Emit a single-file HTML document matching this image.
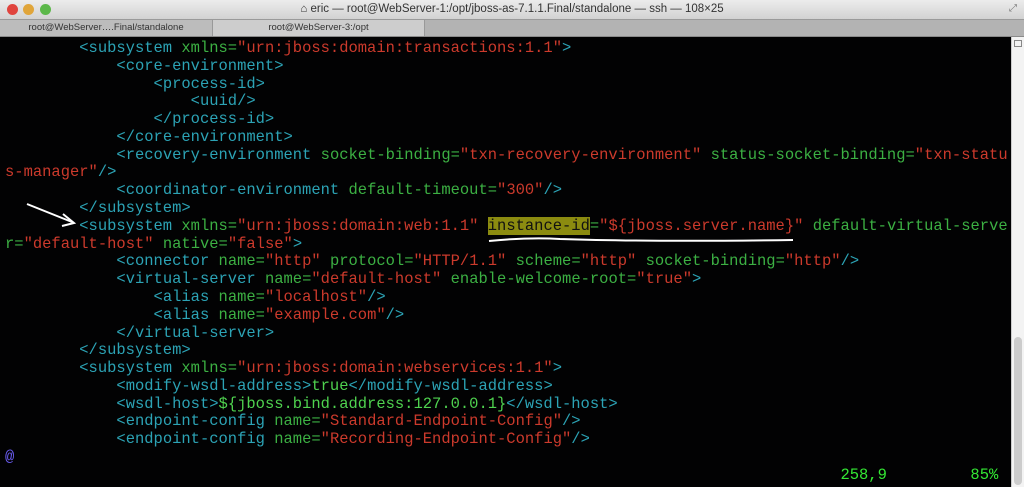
<!DOCTYPE html>
<html><head><meta charset="utf-8"><style>
html,body{margin:0;padding:0;width:1024px;height:487px;overflow:hidden;background:#000;font-family:"Liberation Sans",sans-serif}
#title{position:absolute;left:0;top:0;width:1024px;height:19px;background:linear-gradient(#ececec,#d2d2d2);}
.dot{position:absolute;top:4px;width:11px;height:11px;border-radius:50%}
#title .t{position:absolute;left:0;width:1024px;top:3px;text-align:center;font-size:11.5px;color:#333}
#tabs{position:absolute;left:0;top:19px;width:1024px;height:18px;background:#b3b3b3;border-top:1px solid #9a9a9a;box-sizing:border-box;border-bottom:1px solid #8a8a8a}
.tab{position:absolute;top:0;height:16px;font-size:9.5px;color:#333;text-align:center;line-height:16px;border-right:1px solid #999}
#term{position:absolute;left:0;top:37px;width:1011px;height:450px;background:#020203}
pre{position:absolute;left:5px;top:3px;margin:0;font-family:"Liberation Mono",monospace;font-size:15.47px;line-height:17.78px;color:#ddd}
.g{color:#3cb043}.c{color:#2ca3b5}.r{color:#cc3a2c}.v{color:#4fd24f}.s{color:#34e834}
.hl{background:#8b8b10;color:#111}
#sb{position:absolute;left:1011px;top:37px;width:13px;height:450px;background:#f3f3f3;border-left:1px solid #ccc;box-sizing:border-box}
</style></head><body>
<div id="title">
<div class="dot" style="left:7px;background:#e0443e"></div>
<div class="dot" style="left:23px;background:#e0a53a"></div>
<div class="dot" style="left:40px;background:#5cb84a"></div>
<div class="t">⌂ eric — root@WebServer-1:/opt/jboss-as-7.1.1.Final/standalone — ssh — 108×25</div>
<div style="position:absolute;right:5px;top:3px;width:10px;height:10px;color:#777;font-size:10px">⤢</div>
</div>
<div id="tabs">
<div class="tab" style="left:0;width:212px;background:#bcbcbc">root@WebServer….Final/standalone</div>
<div class="tab" style="left:213px;width:211px;background:#cdcdcd">root@WebServer-3:/opt</div>
</div>
<div id="term">
<pre>        <span class="c">&lt;subsystem</span> <span class="g">xmlns=</span><span class="r">"urn:jboss:domain:transactions:1.1"</span><span class="c">&gt;</span>
            <span class="c">&lt;core-environment&gt;</span>
                <span class="c">&lt;process-id&gt;</span>
                    <span class="c">&lt;uuid/&gt;</span>
                <span class="c">&lt;/process-id&gt;</span>
            <span class="c">&lt;/core-environment&gt;</span>
            <span class="c">&lt;recovery-environment</span> <span class="g">socket-binding=</span><span class="r">"txn-recovery-environment"</span> <span class="g">status-socket-binding=</span><span class="r">"txn-statu</span>
<span class="r">s-manager"</span><span class="c">/&gt;</span>
            <span class="c">&lt;coordinator-environment</span> <span class="g">default-timeout=</span><span class="r">"300"</span><span class="c">/&gt;</span>
        <span class="c">&lt;/subsystem&gt;</span>
        <span class="c">&lt;subsystem</span> <span class="g">xmlns=</span><span class="r">"urn:jboss:domain:web:1.1"</span> <span class="hl">instance-id</span><span class="g">=</span><span class="r">"${jboss.server.name}"</span> <span class="g">default-virtual-serve</span>
<span class="g">r=</span><span class="r">"default-host"</span> <span class="g">native=</span><span class="r">"false"</span><span class="c">&gt;</span>
            <span class="c">&lt;connector</span> <span class="g">name=</span><span class="r">"http"</span> <span class="g">protocol=</span><span class="r">"HTTP/1.1"</span> <span class="g">scheme=</span><span class="r">"http"</span> <span class="g">socket-binding=</span><span class="r">"http"</span><span class="c">/&gt;</span>
            <span class="c">&lt;virtual-server</span> <span class="g">name=</span><span class="r">"default-host"</span> <span class="g">enable-welcome-root=</span><span class="r">"true"</span><span class="c">&gt;</span>
                <span class="c">&lt;alias</span> <span class="g">name=</span><span class="r">"localhost"</span><span class="c">/&gt;</span>
                <span class="c">&lt;alias</span> <span class="g">name=</span><span class="r">"example.com"</span><span class="c">/&gt;</span>
            <span class="c">&lt;/virtual-server&gt;</span>
        <span class="c">&lt;/subsystem&gt;</span>
        <span class="c">&lt;subsystem</span> <span class="g">xmlns=</span><span class="r">"urn:jboss:domain:webservices:1.1"</span><span class="c">&gt;</span>
            <span class="c">&lt;modify-wsdl-address&gt;</span><span class="v">true</span><span class="c">&lt;/modify-wsdl-address&gt;</span>
            <span class="c">&lt;wsdl-host&gt;</span><span class="v">${jboss.bind.address:127.0.0.1}</span><span class="c">&lt;/wsdl-host&gt;</span>
            <span class="c">&lt;endpoint-config</span> <span class="g">name=</span><span class="r">"Standard-Endpoint-Config"</span><span class="c">/&gt;</span>
            <span class="c">&lt;endpoint-config</span> <span class="g">name=</span><span class="r">"Recording-Endpoint-Config"</span><span class="c">/&gt;</span>
<span style="color:#6a5cf0">@</span>
<span class="s">                                                                                          258,9         85%</span></pre>
<svg style="position:absolute;left:0;top:0" width="1011" height="450">
<line x1="27" y1="167" x2="72" y2="185" stroke="#fff" stroke-width="2"/>
<polyline points="63,177 74,186 62,189" fill="none" stroke="#fff" stroke-width="2"/>
<path d="M489 204 Q530 200 560 202 Q650 205 793 203" fill="none" stroke="#fff" stroke-width="2"/>
</svg>
</div>
<div id="sb"><div style="position:absolute;left:2px;top:3px;width:8px;height:7px;border:1px solid #888;box-sizing:border-box"></div>
<div style="position:absolute;left:2px;top:300px;width:8px;height:148px;border-radius:4px;background:#ccc"></div></div>
</body></html>
